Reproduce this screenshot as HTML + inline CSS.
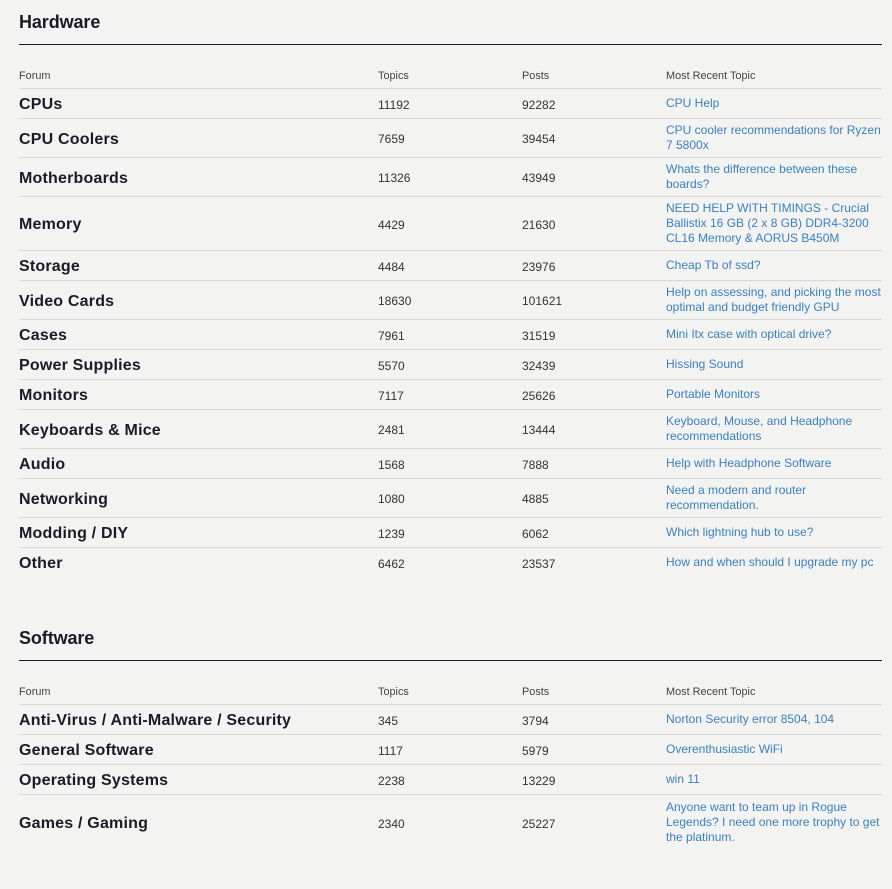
<!DOCTYPE html>
<html><head><meta charset="utf-8"><style>
*{margin:0;padding:0;box-sizing:border-box}
body{width:892px;height:889px;background:#f3f3f2;font-family:"Liberation Sans",sans-serif;color:#1b1b27;position:relative;overflow:hidden}
h2{position:absolute;left:19px;font-size:18px;font-weight:bold;letter-spacing:-0.1px}
.rule{position:absolute;left:19px;width:863px;height:1px;background:#1b1b27}
table{position:absolute;left:19px;width:863px;border-collapse:collapse;table-layout:fixed}
td{vertical-align:middle;font-size:12px;color:#333;padding-top:3px}
tr.h td{font-size:10.9px;color:#444;height:26px;vertical-align:middle;padding-top:2px}
tr.r td{border-top:1px solid #d8d8d8}
td.n{font-weight:bold;font-size:16px;letter-spacing:0.2px;color:#1b1b27;padding-top:4px}
td.l{color:#3b80c2;font-size:12px;line-height:15px;white-space:nowrap;padding-top:1px}
</style></head><body>
<h2 style="top:12px">Hardware</h2>
<div class="rule" style="top:44px"></div>
<table style="top:62px">
<colgroup><col style="width:359px"><col style="width:144px"><col style="width:144px"><col style="width:216px"></colgroup>
<tr class="h"><td>Forum</td><td>Topics</td><td>Posts</td><td>Most Recent Topic</td></tr>
<tr class="r" style="height:30px"><td class="n">CPUs</td><td>11192</td><td>92282</td><td class="l">CPU Help</td></tr>
<tr class="r" style="height:39px"><td class="n">CPU Coolers</td><td>7659</td><td>39454</td><td class="l">CPU cooler recommendations for Ryzen<br>7 5800x</td></tr>
<tr class="r" style="height:39px"><td class="n">Motherboards</td><td>11326</td><td>43949</td><td class="l">Whats the difference between these<br>boards?</td></tr>
<tr class="r" style="height:54px"><td class="n">Memory</td><td>4429</td><td>21630</td><td class="l">NEED HELP WITH TIMINGS - Crucial<br>Ballistix 16 GB (2 x 8 GB) DDR4-3200<br>CL16 Memory &amp; AORUS B450M</td></tr>
<tr class="r" style="height:30px"><td class="n">Storage</td><td>4484</td><td>23976</td><td class="l">Cheap Tb of ssd?</td></tr>
<tr class="r" style="height:39px"><td class="n">Video Cards</td><td>18630</td><td>101621</td><td class="l">Help on assessing, and picking the most<br>optimal and budget friendly GPU</td></tr>
<tr class="r" style="height:30px"><td class="n">Cases</td><td>7961</td><td>31519</td><td class="l">Mini Itx case with optical drive?</td></tr>
<tr class="r" style="height:30px"><td class="n">Power Supplies</td><td>5570</td><td>32439</td><td class="l">Hissing Sound</td></tr>
<tr class="r" style="height:30px"><td class="n">Monitors</td><td>7117</td><td>25626</td><td class="l">Portable Monitors</td></tr>
<tr class="r" style="height:39px"><td class="n">Keyboards &amp; Mice</td><td>2481</td><td>13444</td><td class="l">Keyboard, Mouse, and Headphone<br>recommendations</td></tr>
<tr class="r" style="height:30px"><td class="n">Audio</td><td>1568</td><td>7888</td><td class="l">Help with Headphone Software</td></tr>
<tr class="r" style="height:39px"><td class="n">Networking</td><td>1080</td><td>4885</td><td class="l">Need a modem and router<br>recommendation.</td></tr>
<tr class="r" style="height:30px"><td class="n">Modding / DIY</td><td>1239</td><td>6062</td><td class="l">Which lightning hub to use?</td></tr>
<tr class="r" style="height:30px"><td class="n">Other</td><td>6462</td><td>23537</td><td class="l">How and when should I upgrade my pc</td></tr>
</table>
<h2 style="top:628px">Software</h2>
<div class="rule" style="top:660px"></div>
<table style="top:678px">
<colgroup><col style="width:359px"><col style="width:144px"><col style="width:144px"><col style="width:216px"></colgroup>
<tr class="h"><td>Forum</td><td>Topics</td><td>Posts</td><td>Most Recent Topic</td></tr>
<tr class="r" style="height:30px"><td class="n">Anti-Virus / Anti-Malware / Security</td><td>345</td><td>3794</td><td class="l">Norton Security error 8504, 104</td></tr>
<tr class="r" style="height:30px"><td class="n">General Software</td><td>1117</td><td>5979</td><td class="l">Overenthusiastic WiFi</td></tr>
<tr class="r" style="height:30px"><td class="n">Operating Systems</td><td>2238</td><td>13229</td><td class="l">win 11</td></tr>
<tr class="r" style="height:56px"><td class="n">Games / Gaming</td><td>2340</td><td>25227</td><td class="l">Anyone want to team up in Rogue<br>Legends? I need one more trophy to get<br>the platinum.</td></tr>
</table>
</body></html>
